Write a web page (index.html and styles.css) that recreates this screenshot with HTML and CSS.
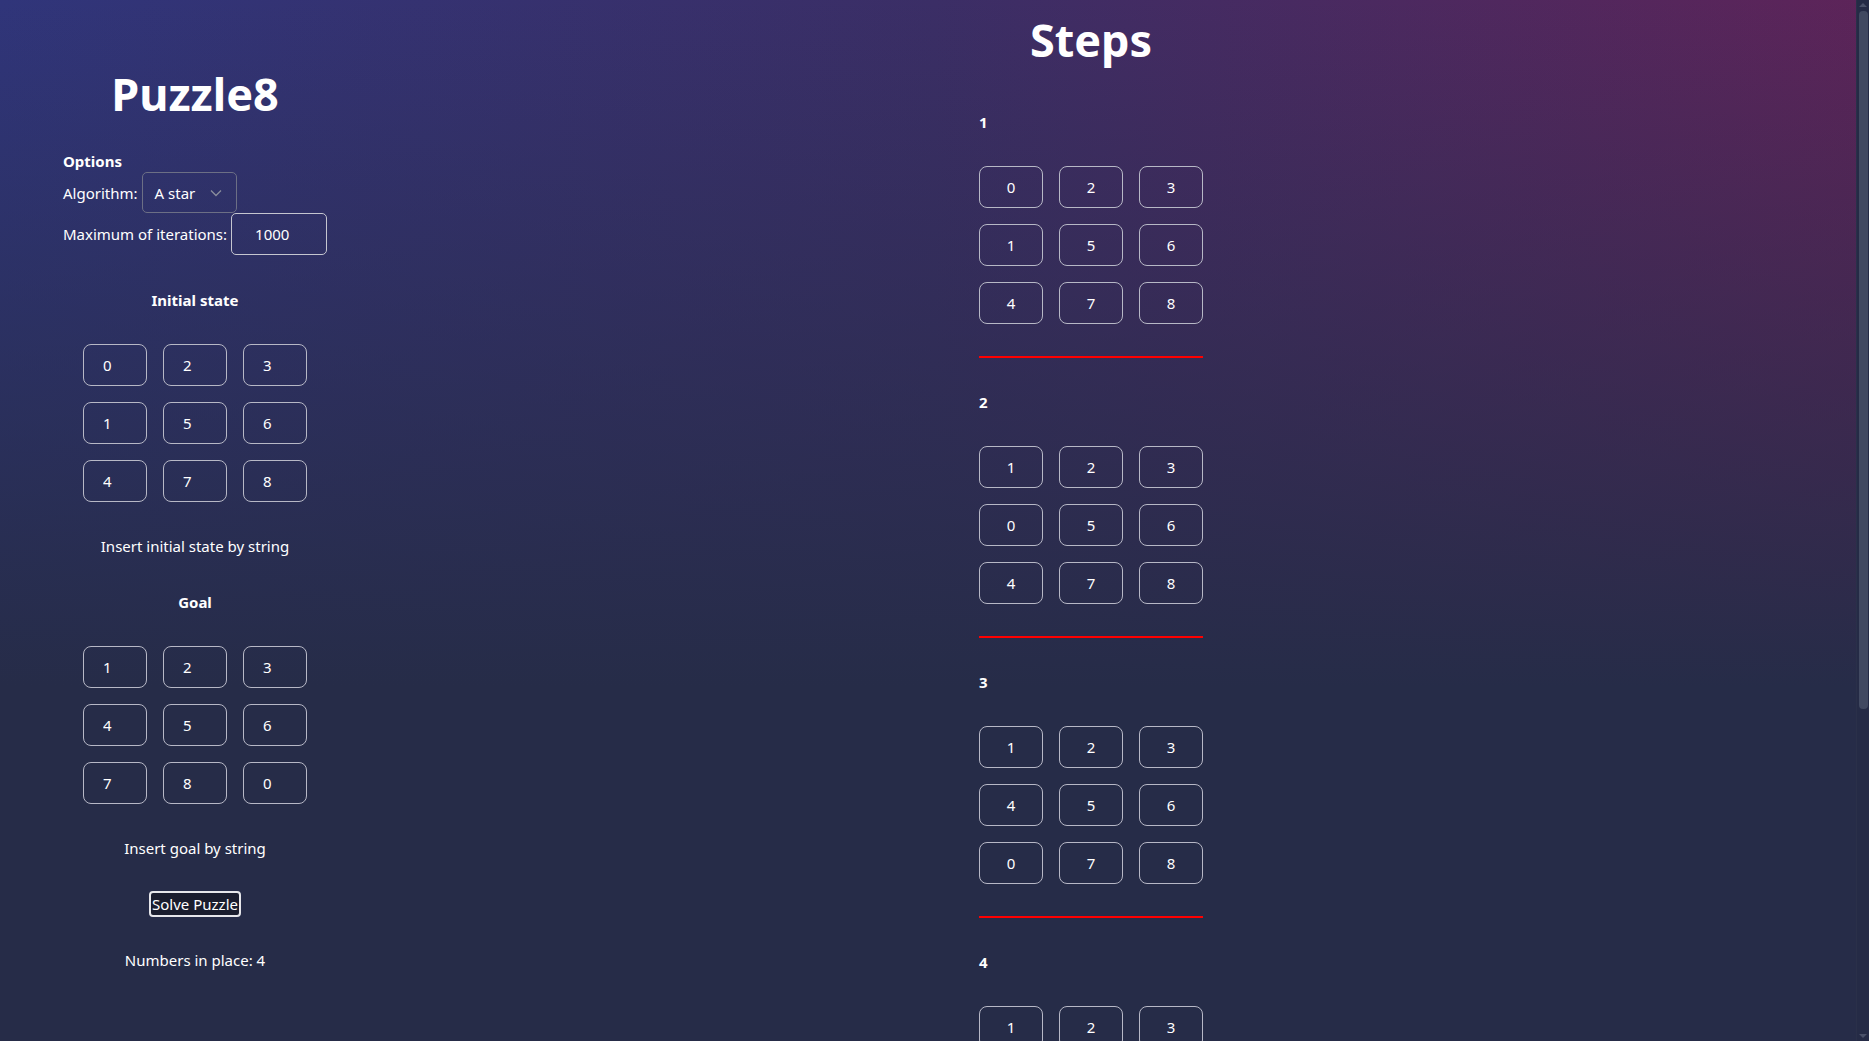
FILE: index.html
```html
<!DOCTYPE html>
<html lang="en">
<head>
<meta charset="utf-8">
<title>Puzzle8</title>
<link rel="stylesheet" href="styles.css">
</head>
<body>
<div class="page">
  <section class="left">
    <h1 class="title">Puzzle8</h1>
    <div class="options">
      <div class="options-title">Options</div>
      <div class="opt-row">
        <span class="opt-label">Algorithm:</span>
        <div class="select">
          <span>A star</span>
          <svg class="chev" width="12" height="8" viewBox="0 0 12 8"><path d="M1 1.5 L6 6.5 L11 1.5" fill="none" stroke="#8a8d9c" stroke-width="1.3"/></svg>
        </div>
      </div>
      <div class="opt-row">
        <span class="opt-label">Maximum of iterations:</span>
        <input class="iter" type="text" value="1000">
      </div>
    </div>

    <div class="label first">Initial state</div>
    <div class="board edit">
      <input class="cell" value="0"><input class="cell" value="2"><input class="cell" value="3">
      <input class="cell" value="1"><input class="cell" value="5"><input class="cell" value="6">
      <input class="cell" value="4"><input class="cell" value="7"><input class="cell" value="8">
    </div>
    <div class="text">Insert initial state by string</div>

    <div class="label">Goal</div>
    <div class="board edit">
      <input class="cell" value="1"><input class="cell" value="2"><input class="cell" value="3">
      <input class="cell" value="4"><input class="cell" value="5"><input class="cell" value="6">
      <input class="cell" value="7"><input class="cell" value="8"><input class="cell" value="0">
    </div>
    <div class="text">Insert goal by string</div>

    <div class="btn-wrap"><button class="solve">Solve Puzzle</button></div>
    <div class="text result">Numbers in place: 4</div>
  </section>

  <section class="steps">
    <h1 class="title steps-title">Steps</h1>

    <div class="step">
      <div class="step-num">1</div>
      <div class="board view">
        <div class="cell">0</div><div class="cell">2</div><div class="cell">3</div>
        <div class="cell">1</div><div class="cell">5</div><div class="cell">6</div>
        <div class="cell">4</div><div class="cell">7</div><div class="cell">8</div>
      </div>
      <div class="sep"></div>
    </div>

    <div class="step">
      <div class="step-num">2</div>
      <div class="board view">
        <div class="cell">1</div><div class="cell">2</div><div class="cell">3</div>
        <div class="cell">0</div><div class="cell">5</div><div class="cell">6</div>
        <div class="cell">4</div><div class="cell">7</div><div class="cell">8</div>
      </div>
      <div class="sep"></div>
    </div>

    <div class="step">
      <div class="step-num">3</div>
      <div class="board view">
        <div class="cell">1</div><div class="cell">2</div><div class="cell">3</div>
        <div class="cell">4</div><div class="cell">5</div><div class="cell">6</div>
        <div class="cell">0</div><div class="cell">7</div><div class="cell">8</div>
      </div>
      <div class="sep"></div>
    </div>

    <div class="step">
      <div class="step-num">4</div>
      <div class="board view">
        <div class="cell">1</div><div class="cell">2</div><div class="cell">3</div>
        <div class="cell">4</div><div class="cell">5</div><div class="cell">6</div>
        <div class="cell">7</div><div class="cell">0</div><div class="cell">8</div>
      </div>
      <div class="sep"></div>
    </div>

    <div class="step">
      <div class="step-num">5</div>
      <div class="board view">
        <div class="cell">1</div><div class="cell">2</div><div class="cell">3</div>
        <div class="cell">4</div><div class="cell">5</div><div class="cell">6</div>
        <div class="cell">7</div><div class="cell">8</div><div class="cell">0</div>
      </div>
      <div class="sep"></div>
    </div>
  </section>
</div>
<div class="scrollbar" aria-hidden="true">
  <div class="sb-arrow sb-up"></div>
  <div class="sb-thumb"></div>
  <div class="sb-arrow sb-down"></div>
</div>
</body>
</html>
```

FILE: styles.css
```css
html {
  background-color: #262c48;
}
body {
  margin: 0;
  color: #ffffff;
  font-family: "Noto Sans", "Open Sans", sans-serif;
  font-size: 15px;
  line-height: 22px;
  background:
    linear-gradient(to bottom, rgba(38, 44, 72, 0) 0%, rgba(38, 44, 72, 1) 66%),
    linear-gradient(to right, #30357a 0%, #3b2e66 50%, #5d2459 100%);
  background-attachment: fixed;
  background-color: #262c48;
}
.page {
  display: flex;
  align-items: flex-start;
}
.left {
  width: 390px;
  flex: none;
  text-align: center;
}
.title {
  margin: 62px 0 0;
  font-size: 45px;
  line-height: 64px;
  font-weight: 700;
}
.options {
  text-align: left;
  padding-left: 63px;
  margin-top: 24px;
}
.options-title {
  font-weight: 700;
  line-height: 22px;
}
.opt-row {
  display: flex;
  align-items: center;
  gap: 4px;
}
.select {
  box-sizing: border-box;
  width: 95px;
  height: 41px;
  border: 1px solid #6c6f85;
  border-radius: 5px;
  display: flex;
  align-items: center;
  justify-content: space-between;
  padding: 0 14px 0 12px;
}
.chev {
  display: block;
}
.iter {
  box-sizing: border-box;
  width: 96px;
  height: 42px;
  border: 1px solid #c5c6d0;
  border-radius: 5px;
  background: transparent;
  color: #ffffff;
  font: inherit;
  padding: 0 0 0 23px;
  outline: none;
}
.label {
  font-weight: 700;
  margin-top: 34px;
}
.label.first {
  margin-top: 34px;
}
.board {
  display: grid;
  grid-template-columns: repeat(3, 64px);
  grid-auto-rows: 42px;
  gap: 16px;
  margin: 33px auto 0;
  width: 224px;
}
.cell {
  box-sizing: border-box;
  border: 1px solid #b7b8c6;
  border-radius: 8px;
  background: transparent;
  color: #ffffff;
  font: inherit;
  margin: 0;
}
.edit .cell {
  padding: 0 0 0 19px;
  text-align: left;
  outline: none;
  width: 64px;
  height: 42px;
}
.view .cell {
  display: flex;
  align-items: center;
  justify-content: center;
}
.text {
  margin-top: 33px;
}
.btn-wrap {
  margin-top: 32px;
  height: 26px;
}
.solve {
  box-sizing: border-box;
  height: 26px;
  padding: 0 1px;
  white-space: nowrap;
  background: #1a1d2e;
  color: #ffffff;
  border: 2px solid #e6e6ea;
  border-radius: 4px;
  font: inherit;
  line-height: 20px;
}
.result {
  margin-top: 32px;
}
.steps {
  margin-left: 589px;
  width: 224px;
  flex: none;
  padding-bottom: 10px;
}
.steps-title {
  margin-top: 8px;
  text-align: center;
}
.step-num {
  font-weight: 700;
  margin-top: 39px;
}
.step + .step .step-num {
  margin-top: 33px;
}
.board.view {
  margin: 33px 0 0;
}
.sep {
  height: 2px;
  background: #ff0000;
  margin-top: 32px;
}
.scrollbar {
  position: fixed;
  top: 0;
  right: 0;
  width: 13px;
  height: 100vh;
  background: #252b46;
  border-left: 1px solid #2a3049;
  box-sizing: border-box;
  display: flex;
  flex-direction: column;
  align-items: center;
}
.sb-arrow {
  width: 0;
  height: 0;
  border-left: 4px solid transparent;
  border-right: 4px solid transparent;
  flex: none;
}
.sb-up {
  margin-top: 3px;
  border-bottom: 4px solid #4a5169;
}
.sb-thumb {
  width: 9px;
  height: 698px;
  margin-top: 4px;
  background: #414961;
  border-radius: 4px;
  flex: none;
}
.sb-down {
  margin-top: auto;
  margin-bottom: 3px;
  border-top: 4px solid #4a5169;
}
```
